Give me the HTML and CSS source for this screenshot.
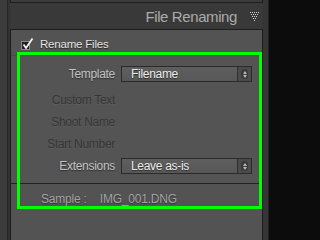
FILE: index.html
```html
<!DOCTYPE html>
<html>
<head>
<meta charset="utf-8">
<link rel="stylesheet" href="styles.css">
</head>
<body>
<div class="frame">
  <div class="column">
    <div class="prev-panel"></div>
    <div class="header">
      <span class="title">File Renaming</span>
      <svg class="disclosure" width="10" height="10" viewBox="0 0 10 10">
        <g fill="#cfcfcf">
          <rect x="0" y="0" width="1" height="1"/><rect x="2" y="0" width="1" height="1"/><rect x="4" y="0" width="1" height="1"/><rect x="6" y="0" width="1" height="1"/><rect x="8" y="0" width="1" height="1"/>
          <rect x="1" y="2" width="1" height="1"/><rect x="3" y="2" width="1" height="1"/><rect x="5" y="2" width="1" height="1"/><rect x="7" y="2" width="1" height="1"/>
          <rect x="2" y="4" width="1" height="1"/><rect x="4" y="4" width="1" height="1"/><rect x="6" y="4" width="1" height="1"/>
          <rect x="3" y="6" width="1" height="1"/><rect x="5" y="6" width="1" height="1"/>
          <rect x="4" y="8" width="1" height="1"/>
        </g>
      </svg>
    </div>
    <div class="section">
      <div class="check-row">
        <span class="checkbox">
          <svg width="14" height="14" viewBox="0 0 14 14">
            <path d="M2.5 7.5 L5 11 L11.5 1.5" fill="none" stroke="#f2f2f2" stroke-width="1.8"/>
          </svg>
        </span>
        <span class="check-label">Rename Files</span>
      </div>
      <div class="settings">
        <div class="row first">
          <span class="label">Template</span>
          <div class="select">
            <span class="select-text">Filename</span>
            <span class="stepper"><span class="pill"><i class="up"></i><i class="down"></i></span></span>
          </div>
        </div>
        <div class="row">
          <span class="label disabled">Custom Text</span>
        </div>
        <div class="row">
          <span class="label disabled">Shoot Name</span>
        </div>
        <div class="row">
          <span class="label disabled">Start Number</span>
        </div>
        <div class="row">
          <span class="label">Extensions</span>
          <div class="select">
            <span class="select-text">Leave as-is</span>
            <span class="stepper"><span class="pill"><i class="up"></i><i class="down"></i></span></span>
          </div>
        </div>
      </div>
      <div class="sample">
        <span>Sample :</span>
        <span>IMG_001.DNG</span>
      </div>
    </div>
  </div>
  <div class="highlight"></div>
</div>
</body>
</html>
```

FILE: styles.css
```css
html, body {
  margin: 0;
  padding: 0;
}
html {
  background: #0c0c0c;
}
body {
  font-family: "Liberation Sans", Arial, sans-serif;
}
.frame {
  position: relative;
  width: 268px;
  height: 100vh;
  min-height: 215px;
  border-right: 1px solid #202020;
  background: linear-gradient(to right, #3c3c3c 0 7px, #262626 7px 8px, #323232 8px 10px, #353535 10px);
  overflow: hidden;
}
.column {
  margin-left: 10px;
  width: 253px;
  height: 100%;
  display: flex;
  flex-direction: column;
}
.prev-panel {
  height: 2px;
  border: 1px solid #1e1e1e;
  border-top: none;
  background: #3b3b3b;
}
.header {
  height: 26px;
  background: #393939;
  display: flex;
  align-items: center;
  justify-content: flex-end;
  padding-right: 3px;
}
.title {
  font-size: 15px;
  letter-spacing: -0.4px;
  color: #ababab;
  margin-right: 13px;
  line-height: 16px;
  margin-top: 1px;
}
.disclosure {
  display: block;
  margin-top: 2px;
}
.section {
  flex: 1;
  border: 1px solid #1e1e1e;
  border-bottom: none;
  background: #535353;
}
.check-row {
  display: flex;
  align-items: center;
  height: 16px;
  margin-top: 6px;
  padding-left: 10px;
}
.checkbox {
  position: relative;
  width: 7px;
  height: 7px;
  border: 1px solid #8a8a8a;
  background: #1f1f1f;
  margin-top: 2px;
}
.checkbox svg {
  position: absolute;
  left: -1px;
  top: -5px;
}
.check-label {
  margin-left: 10px;
  font-size: 11.5px;
  letter-spacing: -0.2px;
  color: #e4e4e4;
  text-shadow: 0 1px 1px #222;
}
.settings {
  margin-top: 3px;
  border-top: 1px solid #484848;
  border-bottom: 1px solid #232323;
  padding: 7px 0 6px;
  background: #545454;
}
.row {
  display: flex;
  align-items: center;
  height: 22px;
}
.row.first {
  margin-bottom: 4px;
}
.label {
  width: 104px;
  text-align: right;
  font-size: 12px;
  letter-spacing: -0.3px;
  color: #c4c4c4;
  text-shadow: 0 1px 1px #2a2a2a;
}
.label.disabled {
  color: #363636;
  text-shadow: 0 1px 0 #5c5c5c;
}
.select {
  margin-left: 6px;
  width: 129px;
  height: 14px;
  border: 1px solid #2a2a2a;
  background: linear-gradient(#5e5e5e, #575757);
  display: flex;
  align-items: center;
}
.select-text {
  flex: 1;
  padding-left: 9px;
  font-size: 12px;
  letter-spacing: -0.3px;
  color: #ececec;
  text-shadow: 0 1px 1px #2a2a2a;
}
.stepper {
  width: 13px;
  height: 14px;
  border-left: 1px solid #2e2e2e;
  background: #4b4b4b;
  display: flex;
  align-items: center;
  justify-content: center;
}
.pill {
  width: 7px;
  height: 10px;
  border-radius: 4px;
  background: #3a3a3a;
  display: flex;
  flex-direction: column;
  align-items: center;
  justify-content: center;
  gap: 1px;
}
.pill i {
  display: block;
  width: 0;
  height: 0;
  border-left: 2.5px solid transparent;
  border-right: 2.5px solid transparent;
}
.pill .up {
  border-bottom: 3px solid #b8b8b8;
}
.pill .down {
  border-top: 3px solid #b8b8b8;
}
.sample {
  display: flex;
  gap: 13px;
  padding-left: 30px;
  margin-top: 8px;
  font-size: 12px;
  letter-spacing: -0.2px;
  color: #a3a3a3;
  text-shadow: 0 1px 1px #333;
  line-height: 14px;
}
.highlight {
  position: absolute;
  left: 17px;
  top: 52px;
  width: 239px;
  height: 151px;
  border: 3px solid #0f0;
}
```
